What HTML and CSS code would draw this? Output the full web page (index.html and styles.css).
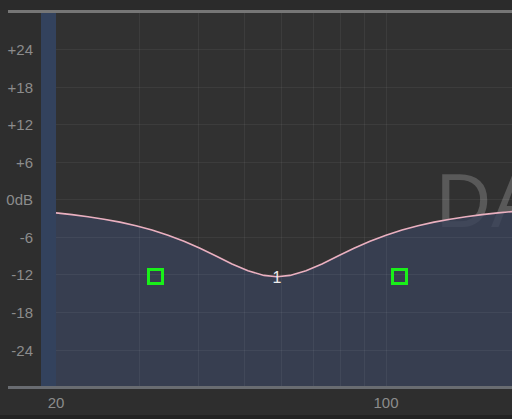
FILE: index.html
```html
<!DOCTYPE html>
<html>
<head>
	<meta charset="utf-8">
	<title>EQ</title>
	<link rel="stylesheet" href="styles.css">
</head>
<body>
	<div class="eq">
		<div class="topbar"></div>
		<div class="frame">
			<svg class="graph" width="504" height="373" viewBox="0 0 504 373">
				<rect class="plotbg" x="48" y="0" width="456" height="373"/>
				<rect class="band" x="33" y="0" width="15" height="373"/>
				<text class="mark" x="428" y="214">DA</text>
				<path class="fill" d="M48,199.9 L64,201.6 L80,203.7 L96,206.2 L112,209.1 L128,212.7 L144,217 L160,222.2 L176,228.3 L192,235.3 L208,243 L224,250.9 L240,257.8 L256,262.4 L269,263.7 L282,262.4 L298,257.8 L314,250.9 L330,243 L346,235.3 L362,228.3 L378,222.2 L394,217 L410,212.7 L426,209.1 L442,206.2 L458,203.7 L474,201.6 L490,199.9 L504,198.6 L504,373 L48,373 Z"/>
				<g class="grid">
					<line x1="48" x2="504" y1="36.5" y2="36.5"/>
					<line x1="48" x2="504" y1="74.5" y2="74.5"/>
					<line x1="48" x2="504" y1="111.5" y2="111.5"/>
					<line x1="48" x2="504" y1="149.5" y2="149.5"/>
					<line x1="48" x2="504" y1="186.5" y2="186.5"/>
					<line x1="48" x2="504" y1="224.5" y2="224.5"/>
					<line x1="48" x2="504" y1="261.5" y2="261.5"/>
					<line x1="48" x2="504" y1="299.5" y2="299.5"/>
					<line x1="48" x2="504" y1="337.5" y2="337.5"/>
					<line x1="131.5" x2="131.5" y1="0" y2="373"/>
					<line x1="190.5" x2="190.5" y1="0" y2="373"/>
					<line x1="236.5" x2="236.5" y1="0" y2="373"/>
					<line x1="273.5" x2="273.5" y1="0" y2="373"/>
					<line x1="305.5" x2="305.5" y1="0" y2="373"/>
					<line x1="332.5" x2="332.5" y1="0" y2="373"/>
					<line x1="356.5" x2="356.5" y1="0" y2="373"/>
					<line x1="378.5" x2="378.5" y1="0" y2="373"/>
				</g>
				<path class="curve" d="M48,199.9 L64,201.6 L80,203.7 L96,206.2 L112,209.1 L128,212.7 L144,217 L160,222.2 L176,228.3 L192,235.3 L208,243 L224,250.9 L240,257.8 L256,262.4 L269,263.7 L282,262.4 L298,257.8 L314,250.9 L330,243 L346,235.3 L362,228.3 L378,222.2 L394,217 L410,212.7 L426,209.1 L442,206.2 L458,203.7 L474,201.6 L490,199.9 L504,198.6"/>
				<g class="ylabels">
					<text x="25" y="36.5">+24</text>
					<text x="25" y="74">+18</text>
					<text x="25" y="111.5">+12</text>
					<text x="25" y="149">+6</text>
					<text x="25" y="186.5">0dB</text>
					<text x="25" y="224">-6</text>
					<text x="25" y="261.5">-12</text>
					<text x="25" y="299">-18</text>
					<text x="25" y="337">-24</text>
				</g>
				<rect class="handle" x="140.5" y="256.5" width="14" height="14"/>
				<rect class="handle" x="384.5" y="256.5" width="14" height="14"/>
				<text class="bandno" x="269" y="270">1</text>
			</svg>
		</div>
		<div class="xaxis">
			<span class="xl x20">20</span>
			<span class="xl x100">100</span>
		</div>
		<div class="foot"></div>
	</div>
</body>
</html>
```

FILE: styles.css
```css
body{margin: 0;background: #2e2e2e;font-family: "Liberation Sans", Arial, sans-serif;}
.eq{width: 512px;height: 419px;background: #2e2e2e;display: flex;flex-direction: column;overflow: hidden;}
.topbar{height: 10px;background: #2b2b2b;}
.frame{margin-left: 8px;border-top: 3px solid #767676;border-bottom: 3px solid #696c71;height: 373px;}
.graph{display: block;overflow: visible;}
.plotbg{fill: #313131;}
.band{fill: #33425d;}
.mark{font-family: "Liberation Sans", Arial, sans-serif;font-size: 76px;fill: #595959;}
.fill{fill: #3a425a;fill-opacity: 0.78;}
.grid line{stroke: rgba(255,255,255,0.055);stroke-width: 1;}
.curve{fill: none;stroke: #eab0c0;stroke-width: 1.6;}
.ylabels text{font-family: "Liberation Sans", Arial, sans-serif;font-size: 15px;fill: #8c8c8c;text-anchor: end;dominant-baseline: central;}
.handle{fill: none;stroke: #19f019;stroke-width: 3;}
.bandno{font-family: "Liberation Sans", Arial, sans-serif;font-size: 16px;fill: #ececec;text-anchor: middle;}
.xaxis{height: 26px;display: flex;align-items: center;font-size: 15px;color: #8c8c8c;}
.xl{display: block;text-align: center;}
.x20{width: 30px;margin-left: 41px;}
.x100{width: 40px;margin-left: 295px;}
.foot{flex: 1;background: #232323;}
```
